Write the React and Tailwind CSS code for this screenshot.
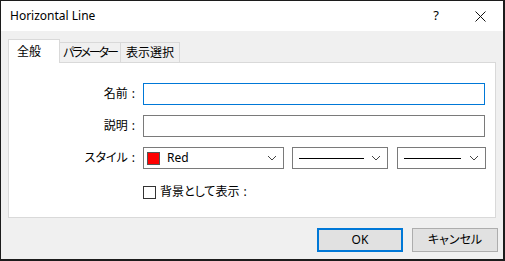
import React from "react";

const Chevron = () => (
  <svg width="10" height="6" viewBox="0 0 10 6" className="shrink-0">
    <path d="M1 1 L5 5 L9 1" fill="none" stroke="#444" strokeWidth="1" />
  </svg>
);

const Combo = ({ className, children }) => (
  <div
    className={
      "h-[22px] border border-[#7a7a7a] bg-white flex items-center pl-[3px] pr-[6px] " +
      className
    }
  >
    <div className="flex-1 flex items-center min-w-0">{children}</div>
    <Chevron />
  </div>
);

const Label = ({ children }) => (
  <div className="w-[134px] text-right pr-[8px]">
    {children}
    <span className="ml-[4px]">:</span>
  </div>
);

const App = () => {
  return (
    <div className="w-[505px] h-[261px] bg-[#1c1c1c] pt-px pl-px overflow-hidden font-['Noto_Sans','Noto_Sans_CJK_JP',sans-serif] text-[12px] text-black [font-feature-settings:'palt']">
      <div className="w-[502px] h-[258px] flex flex-col bg-[#f0f0f0]">
        {/* Title bar */}
        <div className="h-[30px] bg-white flex items-center pl-[9px]">
          <span className="flex-1 text-[12px]">Horizontal Line</span>
          <span className="w-[20px] text-center text-[13px] mr-[29px]">?</span>
          <svg width="11" height="11" viewBox="0 0 11 11" className="mr-[17px]">
            <path d="M0.5 0.5 L10.5 10.5 M10.5 0.5 L0.5 10.5" stroke="#111" strokeWidth="1" />
          </svg>
        </div>

        {/* Body */}
        <div className="flex-1 pt-[7px] pl-[7px] pr-[5px] flex flex-col">
          {/* Tabs */}
          <div className="flex items-end h-[24px] whitespace-nowrap">
            <div className="w-[52px] h-[24px] bg-white border border-b-0 border-[#d9d9d9] flex items-center pl-[8px] -mb-px relative z-10">
              全般
            </div>
            <div className="w-[61px] h-[20px] border-t border-r border-[#d9d9d9] flex items-center justify-center tracking-[-2px]">
              パラメーター
            </div>
            <div className="w-[59px] h-[20px] border-t border-r border-[#d9d9d9] flex items-center justify-center">
              表示選択
            </div>
          </div>

          {/* Tab panel */}
          <div className="w-[488px] h-[156px] bg-white border border-[#d9d9d9] pt-[20px]">
            <div className="flex flex-col gap-[10px]">
              <div className="flex items-center">
                <Label>名前</Label>
                <div className="w-[342px] h-[22px] border border-[#0078d7] bg-white" />
              </div>
              <div className="flex items-center">
                <Label>説明</Label>
                <div className="w-[342px] h-[22px] border border-[#7a7a7a] bg-white" />
              </div>
              <div className="flex items-center">
                <Label>スタイル</Label>
                <Combo className="w-[141px]">
                  <div className="w-[13px] h-[13px] bg-[#ff0000] border border-[#555] mr-[7px]" />
                  <span>Red</span>
                </Combo>
                <Combo className="w-[96px] ml-[8px]">
                  <div className="w-[65px] h-px bg-black ml-[3px]" />
                </Combo>
                <Combo className="w-[89px] ml-[9px]">
                  <div className="w-[57px] h-px bg-black ml-[3px]" />
                </Combo>
              </div>
            </div>
            <div className="flex items-center mt-[14px] ml-[134px]">
              <div className="w-[13px] h-[13px] border border-[#333] bg-white mr-[4px]" />
              <span>
                背景として表示<span className="ml-[4px]">:</span>
              </span>
            </div>
          </div>

          {/* Buttons */}
          <div className="flex justify-end gap-[9px] mt-[10px]">
            <button className="w-[86px] h-[24px] bg-[#e1e1e1] border-2 border-[#0078d7] text-[12px]">
              OK
            </button>
            <button className="w-[86px] h-[24px] bg-[#e1e1e1] border border-[#adadad] text-[12px]">
              キャンセル
            </button>
          </div>
        </div>
      </div>
    </div>
  );
};

export default App;
